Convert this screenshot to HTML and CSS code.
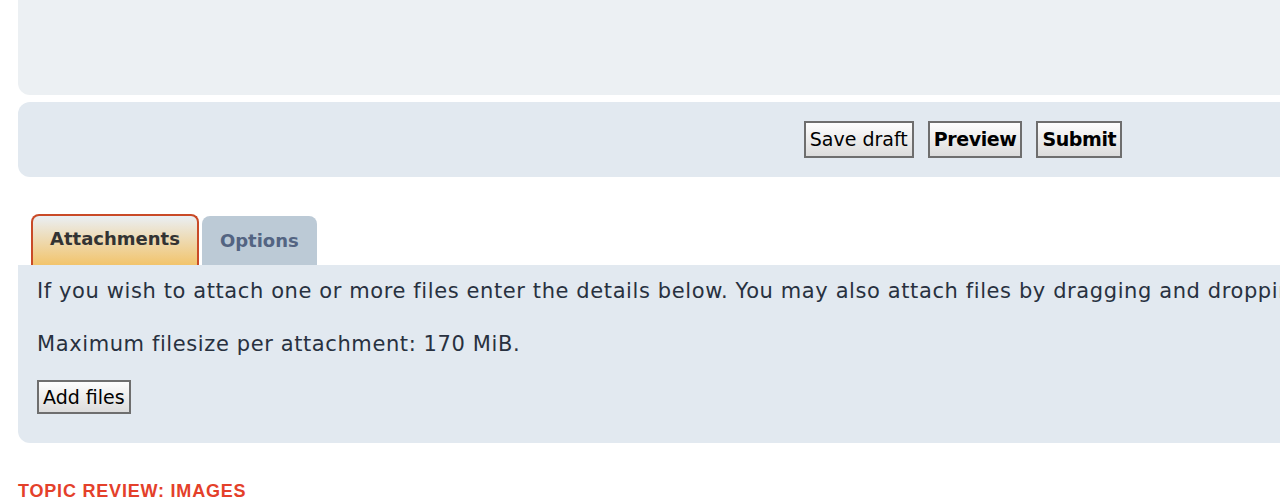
FILE: index.html
```html
<!DOCTYPE html>
<html lang="en">
<head>
<meta charset="utf-8">
<title>Post</title>
<link rel="stylesheet" href="styles.css">
</head>
<body>
<div class="page">
  <div class="panel panel-top"></div>
  <div class="panel panel-submit">
    <button class="btn">Save draft</button>
    <button class="btn btn-bold">Preview</button>
    <button class="btn btn-bold">Submit</button>
  </div>
  <div class="tabs">
    <div class="tab tab-active">Attachments</div>
    <div class="tab">Options</div>
  </div>
  <div class="panel panel-attach">
    <p class="line">If you wish to attach one or more files enter the details below. You may also attach files by dragging and dropping them into the message box.</p>
    <p class="line line-second">Maximum filesize per attachment: 170 MiB.</p>
    <button class="btn btn-small">Add files</button>
  </div>
  <h3 class="review">TOPIC REVIEW: IMAGES</h3>
</div>
</body>
</html>
```
FILE: styles.css
```css
html, body {
  margin: 0;
  padding: 0;
  background: #ffffff;
  overflow: hidden;
}
.page {
  width: 1890px;
  margin-left: 18px;
  font-family: "DejaVu Sans", Verdana, sans-serif;
  color: #333333;
}
.panel-top {
  height: 95px;
  background: #ecf0f3;
  border-radius: 0 0 12px 12px;
}
.panel-submit {
  margin-top: 7px;
  height: 75px;
  background: #e2e9f0;
  border-radius: 12px;
  display: flex;
  justify-content: center;
  align-items: center;
  gap: 14px;
}
.btn {
  font-family: "DejaVu Sans", Verdana, sans-serif;
  font-size: 19px;
  color: #000;
  background: linear-gradient(#fdfdfd, #dcdcdc);
  border: 2px solid #6e6e6e;
  padding: 0 4px;
  height: 37px;
  line-height: 33px;
  margin: 0;
  border-radius: 0;
}
.btn-bold {
  font-weight: bold;
  letter-spacing: -0.4px;
}
.tabs {
  margin-top: 37px;
  display: flex;
  align-items: flex-end;
  gap: 3px;
  padding-left: 13px;
  height: 51px;
}
.tab {
  font-size: 18px;
  font-weight: bold;
  color: #536482;
  background: #bccad6;
  border-radius: 8px 8px 0 0;
  height: 49px;
  box-sizing: border-box;
  padding: 13px 18px 0;
  line-height: 24px;
}
.tab-active {
  height: 51px;
  color: #333333;
  border: 2px solid #c94a27;
  border-bottom: 0;
  background: linear-gradient(#eaeff4, #f2c46c);
  padding: 11px 17px 0;
}
.panel-attach {
  background: #e2e9f0;
  height: 178px;
  border-radius: 0 0 12px 12px;
  padding: 12px 19px 0;
  box-sizing: border-box;
}
.line {
  margin: 0;
  font-size: 21px;
  letter-spacing: 0.6px;
  line-height: 28px;
  white-space: nowrap;
  color: #28313f;
}
.line-second {
  margin-top: 25px;
}
.btn-small {
  margin-top: 22px;
  height: 34px;
  line-height: 30px;
  padding: 0 4px;
}
.review {
  margin: 37px 0 0;
  font-family: "Liberation Sans", Arial, sans-serif;
  font-size: 18px;
  font-weight: bold;
  letter-spacing: 0.8px;
  color: #e4402a;
  line-height: 22px;
}
```
